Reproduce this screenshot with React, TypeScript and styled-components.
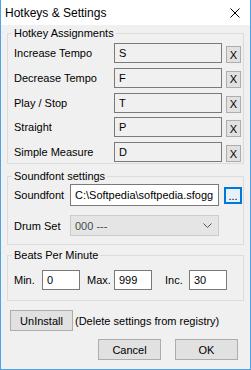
import React from "react";
import styled, { createGlobalStyle } from "styled-components";

const hotkeys = [
  { label: "Increase Tempo", key: "S" },
  { label: "Decrease Tempo", key: "F" },
  { label: "Play / Stop", key: "T" },
  { label: "Straight", key: "P" },
  { label: "Simple Measure", key: "D" },
];

const bpm = [
  { label: "Min.", value: "0", indent: 0 },
  { label: "Max.", value: "999", indent: 7 },
  { label: "Inc.", value: "30", indent: 13 },
];

export default function App() {
  return (
    <>
      <GlobalStyle />
      <Window>
        <TitleBar>
          <Title>Hotkeys &amp; Settings</Title>
          <svg width="10" height="10" viewBox="0 0 10 10">
            <path d="M0.5 0.5 L9.5 9.5 M9.5 0.5 L0.5 9.5" stroke="#000" strokeWidth="1" />
          </svg>
        </TitleBar>

        <Body>
          <Group $top={0} $bottom={1}>
            <Legend>Hotkey Assignments</Legend>
            <HotkeyGrid>
              {hotkeys.map((h) => (
                <React.Fragment key={h.label}>
                  <Label>{h.label}</Label>
                  <KeyField>{h.key}</KeyField>
                  <ClearButton>X</ClearButton>
                </React.Fragment>
              ))}
            </HotkeyGrid>
          </Group>

          <Group $top={5} $bottom={8}>
            <Legend>Soundfont settings</Legend>
            <SoundGrid>
              <Label>Soundfont</Label>
              <PathField>C:\Softpedia\softpedia.sfogg</PathField>
              <BrowseButton>...</BrowseButton>
              <Label>Drum Set</Label>
              <Combo>
                <span>000 ---</span>
                <svg width="9" height="5" viewBox="0 0 9 5">
                  <path d="M0.5 0.5 L4.5 4.5 L8.5 0.5" fill="none" stroke="#555" strokeWidth="1" />
                </svg>
              </Combo>
            </SoundGrid>
          </Group>

          <Group $top={3} $bottom={10}>
            <Legend>Beats Per Minute</Legend>
            <BpmRow>
              {bpm.map((b) => (
                <React.Fragment key={b.label}>
                  <Label $indent={b.indent}>{b.label}</Label>
                  <NumField>{b.value}</NumField>
                </React.Fragment>
              ))}
            </BpmRow>
          </Group>

          <UninstallRow>
            <Button>UnInstall</Button>
            <Note>(Delete settings from registry)</Note>
          </UninstallRow>

          <DialogButtons>
            <Button>Cancel</Button>
            <Button>OK</Button>
          </DialogButtons>
        </Body>
      </Window>
    </>
  );
}

const GlobalStyle = createGlobalStyle`
  html, body {
    margin: 0;
    padding: 0;
    background: #fff;
  }
  body {
    font-family: "Liberation Sans", Arial, sans-serif;
    color: #000;
  }
  * {
    box-sizing: border-box;
  }
`;

const Window = styled.div`
  width: 251px;
  height: 370px;
  border: 1px solid #4ea2e8;
  border-top: none;
  display: flex;
  flex-direction: column;
  overflow: hidden;
`;

const TitleBar = styled.div`
  height: 25px;
  flex: none;
  background: #fff;
  display: flex;
  align-items: center;
  justify-content: space-between;
  padding: 0 10px 0 4px;
`;

const Title = styled.span`
  font-size: 12px;
`;

const Body = styled.div`
  flex: 1;
  background: #f0f0f0;
  padding: 1px 6px 0;
  display: flex;
  flex-direction: column;
  font-size: 11px;
`;

const Group = styled.fieldset<{ $top: number; $bottom: number }>`
  margin: ${(p) => p.$top}px 0 0;
  padding: 0 1px ${(p) => p.$bottom}px 6px;
  border: 1px solid #dcdcdc;
  min-width: 0;
`;

const Legend = styled.legend`
  padding: 0 2px;
  margin-left: -2px;
  font-size: 11px;
  line-height: 14px;
`;

const Label = styled.span<{ $indent?: number }>`
  padding-left: ${(p) => p.$indent || 0}px;
  white-space: nowrap;
  align-self: center;
`;

const HotkeyGrid = styled.div`
  margin-top: 3px;
  display: grid;
  grid-template-columns: 100px 108px 1fr;
  grid-auto-rows: 20px;
  row-gap: 4.75px;
`;

const KeyField = styled.div`
  border: 1px solid #7a7a7a;
  background: #f0f0f0;
  padding-left: 4px;
  display: flex;
  align-items: center;
`;

const ClearButton = styled.div`
  align-self: end;
  margin-left: 4px;
  width: 15px;
  height: 17px;
  border: 1px solid #adadad;
  background: #e1e1e1;
  display: flex;
  align-items: center;
  justify-content: center;
  font-size: 11px;
`;

const SoundGrid = styled.div`
  margin-top: 1px;
  display: grid;
  grid-template-columns: 56px 149px 1fr;
  grid-template-rows: 22px 21px;
  row-gap: 9px;
`;

const PathField = styled.div`
  border: 1px solid #7a7a7a;
  background: #fff;
  padding-left: 4px;
  display: flex;
  align-items: center;
  white-space: nowrap;
  overflow: hidden;
`;

const BrowseButton = styled.div`
  align-self: center;
  margin-left: 5px;
  width: 18px;
  height: 17px;
  border: 2px solid #0078d7;
  background: #e5f1fb;
  display: flex;
  align-items: flex-end;
  justify-content: center;
  line-height: 12px;
`;

const Combo = styled.div`
  grid-column: 2;
  border: 1px solid #cccccc;
  background: #e5e5e5;
  color: #4a4a4a;
  padding: 0 6px 0 4px;
  display: flex;
  align-items: center;
  justify-content: space-between;
`;

const BpmRow = styled.div`
  margin-top: 8px;
  display: grid;
  grid-template-columns: 28px 38px 34px 38px 37px 38px;
  grid-auto-rows: 20px;
`;

const NumField = styled.div`
  border: 1px solid #7a7a7a;
  background: #fff;
  padding-left: 4px;
  display: flex;
  align-items: center;
`;

const UninstallRow = styled.div`
  margin: 9px 0 0 3px;
  display: flex;
  align-items: center;
  gap: 2px;
`;

const Note = styled.span`
  white-space: nowrap;
`;

const DialogButtons = styled.div`
  margin: 8px 6px 0 0;
  display: flex;
  justify-content: flex-end;
  gap: 14px;
`;

const Button = styled.div`
  width: 63px;
  height: 21px;
  border: 1px solid #adadad;
  background: #e1e1e1;
  display: flex;
  align-items: center;
  justify-content: center;
  font-size: 11px;
`;
